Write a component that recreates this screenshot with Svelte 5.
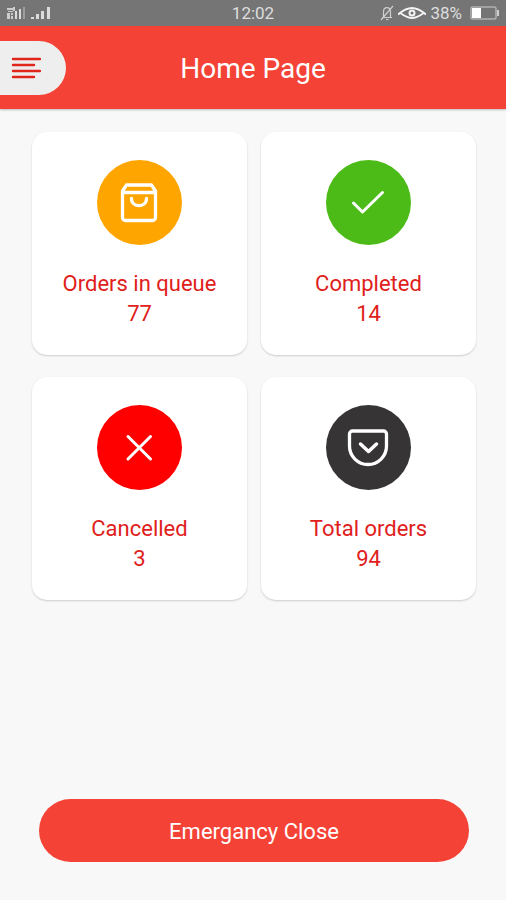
<script>
  const cards = [
    { icon: 'bag', label: 'Orders in queue', count: 77 },
    { icon: 'check', label: 'Completed', count: 14 },
    { icon: 'cross', label: 'Cancelled', count: 3 },
    { icon: 'pocket', label: 'Total orders', count: 94 },
  ];

  let menuOpen = false;
  let closed = false;
</script>

<div class="page">
  <div class="status">
    <div class="side">
      <svg width="46" height="16" viewBox="0 0 46 16" fill="#dcdcdc">
        <path d="M0 3h6v2H0zM1 6h5v1H1zM0 8h3v6H0zM4 8h2v2H4zM4 11h2v3H4zM6 2h2v4H6z" opacity=".85" />
        <path d="M8 6h2v8H8zM12 4h2v10h-2z" />
        <path d="M16 2h2v12h-2z" opacity=".4" />
        <path d="M24 12h3v2h-3zM29 9h3v5h-3zM34 6h3v8h-3zM40 2h3v12h-3z" />
      </svg>
    </div>
    <span class="time">12:02</span>
    <div class="side right">
      <svg width="14" height="16" viewBox="0 0 14 16" fill="none" stroke="#cfcfcf" stroke-width="1.2">
        <path d="M2 12.5h10M3.5 12V7C3.5 4 5 2.7 7 2.7S10.5 4 10.5 7v5M6 14.5h2.5M1 15L13 1" />
      </svg>
      <svg width="28" height="16" viewBox="0 0 28 16" fill="none" stroke="#f4f4f4" stroke-width="2">
        <path d="M0 9.5C6 4.500 10 3 14 3s8 1.500 14 6.5M3 8.5C8 12 11 13 14 13s6-1 11-4.500" />
        <circle cx="14" cy="8" r="2.500" />
      </svg>
      <span class="percent">38%</span>
      <svg class="battery" width="29" height="14" viewBox="0 0 29 14">
        <rect x="1" y="1" width="25" height="12" rx="1" fill="none" stroke="#d0d0d0" />
        <path d="M2 2h9v10H2z" fill="#fff" />
        <path d="M27 4h2v6h-2z" fill="#d0d0d0" />
      </svg>
    </div>
  </div>

  <header>
    <button class="menu" aria-label="Menu" aria-expanded={menuOpen} on:click={() => (menuOpen = !menuOpen)}>
      <svg width="30" height="22" viewBox="0 0 30 22" fill="none" stroke="#e0251b" stroke-width="2.400" stroke-linecap="round">
        <path d="M2 2h27M2 8h21M2 14h27M2 20h21" />
      </svg>
    </button>
    <h1>Home Page</h1>
  </header>

  <main>
    <div class="cards">
      {#each cards as card}
        <section class="card">
          <div class="circle {card.icon}">
            <svg width="44" height="44" viewBox="0 0 44 44" fill="none" stroke="#fff" stroke-width="3" stroke-linecap="round" stroke-linejoin="round">
              {#if card.icon === 'bag'}
                <path d="M8.500 4h25l4 6v26.500a3 3 0 0 1-3 3h-27a3 3 0 0 1-3-3V10zM5 11.500h32M13.500 17.500c0 9.500 15 9.500 15 0" stroke-width="3.300" />
              {:else if card.icon === 'check'}
                <path d="M6.500 22l9 9L35.500 11.500" />
              {:else if card.icon === 'cross'}
                <path d="M10 10.500l22.500 22.500M32.500 10.500l-22.500 22.500" />
              {:else}
                <path d="M5.500 5h31a3 3 0 0 1 3 3v12a18.500 18.500 0 0 1-37 0V8a3 3 0 0 1 3-3z" stroke-width="3.300" />
                <path d="M13.500 18l8 7.500 8-7.500" stroke-width="3.500" />
              {/if}
            </svg>
          </div>
          <h2>{card.label}</h2>
          <p>{card.count}</p>
        </section>
      {/each}
    </div>

    <button class="close" disabled={closed} on:click={() => (closed = true)}>Emergancy Close</button>
  </main>
</div>

<style>
  :global(body) {
    background: #f8f8f8;
  }

  .page {
    display: flex;
    flex-direction: column;
    min-height: 100vh;
    font-family: Roboto, "Liberation Sans", sans-serif;
  }

  .status {
    display: flex;
    align-items: center;
    height: 26px;
    padding: 0 7px;
    background: #757575;
    color: #dedede;
    font-size: 17px;
  }

  .side {
    display: flex;
    flex: 1;
    align-items: center;
    gap: 4px;
  }

  .right {
    justify-content: flex-end;
  }

  .battery {
    margin-left: 4px;
  }

  header {
    display: grid;
    grid-template-columns: 1fr auto 1fr;
    align-items: center;
    height: 83px;
    background: #f44336;
    box-shadow: 0 1px 2px rgba(0, 0, 0, .25);
  }

  .menu {
    display: flex;
    align-items: center;
    justify-self: start;
    width: 66px;
    height: 54px;
    padding: 0 0 0 11px;
    border: none;
    border-radius: 0 27px 27px 0;
    background: #eee;
    cursor: pointer;
  }

  h1 {
    margin: 0;
    padding-top: 2px;
    color: #fff;
    font-size: 28px;
    font-weight: 400;
    line-height: 36px;
  }

  main {
    display: flex;
    flex: 1;
    flex-direction: column;
    justify-content: space-between;
    padding: 23px 30px 38px 32px;
  }

  .cards {
    display: grid;
    grid-template-columns: 1fr 1fr;
    gap: 22px 14px;
  }

  .card {
    display: flex;
    flex-direction: column;
    align-items: center;
    padding: 28px 8px 26px;
    border-radius: 15px;
    background: #fff;
    box-shadow: 0 1px 2px rgba(0, 0, 0, .18);
    color: #e0201b;
    text-align: center;
  }

  .circle {
    display: flex;
    align-items: center;
    justify-content: center;
    width: 85px;
    height: 85px;
    margin-bottom: 24px;
    border-radius: 50%;
  }

  .bag {
    background: #ffa500;
  }

  .check {
    background: #4cbb17;
  }

  .cross {
    background: #f00;
  }

  .pocket {
    background: #363435;
  }

  h2,
  p {
    margin: 0;
    font-size: 22px;
    font-weight: 400;
    line-height: 30px;
  }

  .close {
    height: 63px;
    margin: 0 7px;
    padding: 2px 16px 0;
    border: none;
    border-radius: 32px;
    background: #f44336;
    color: #fff;
    font-family: inherit;
    font-size: 22px;
    cursor: pointer;
  }
</style>
